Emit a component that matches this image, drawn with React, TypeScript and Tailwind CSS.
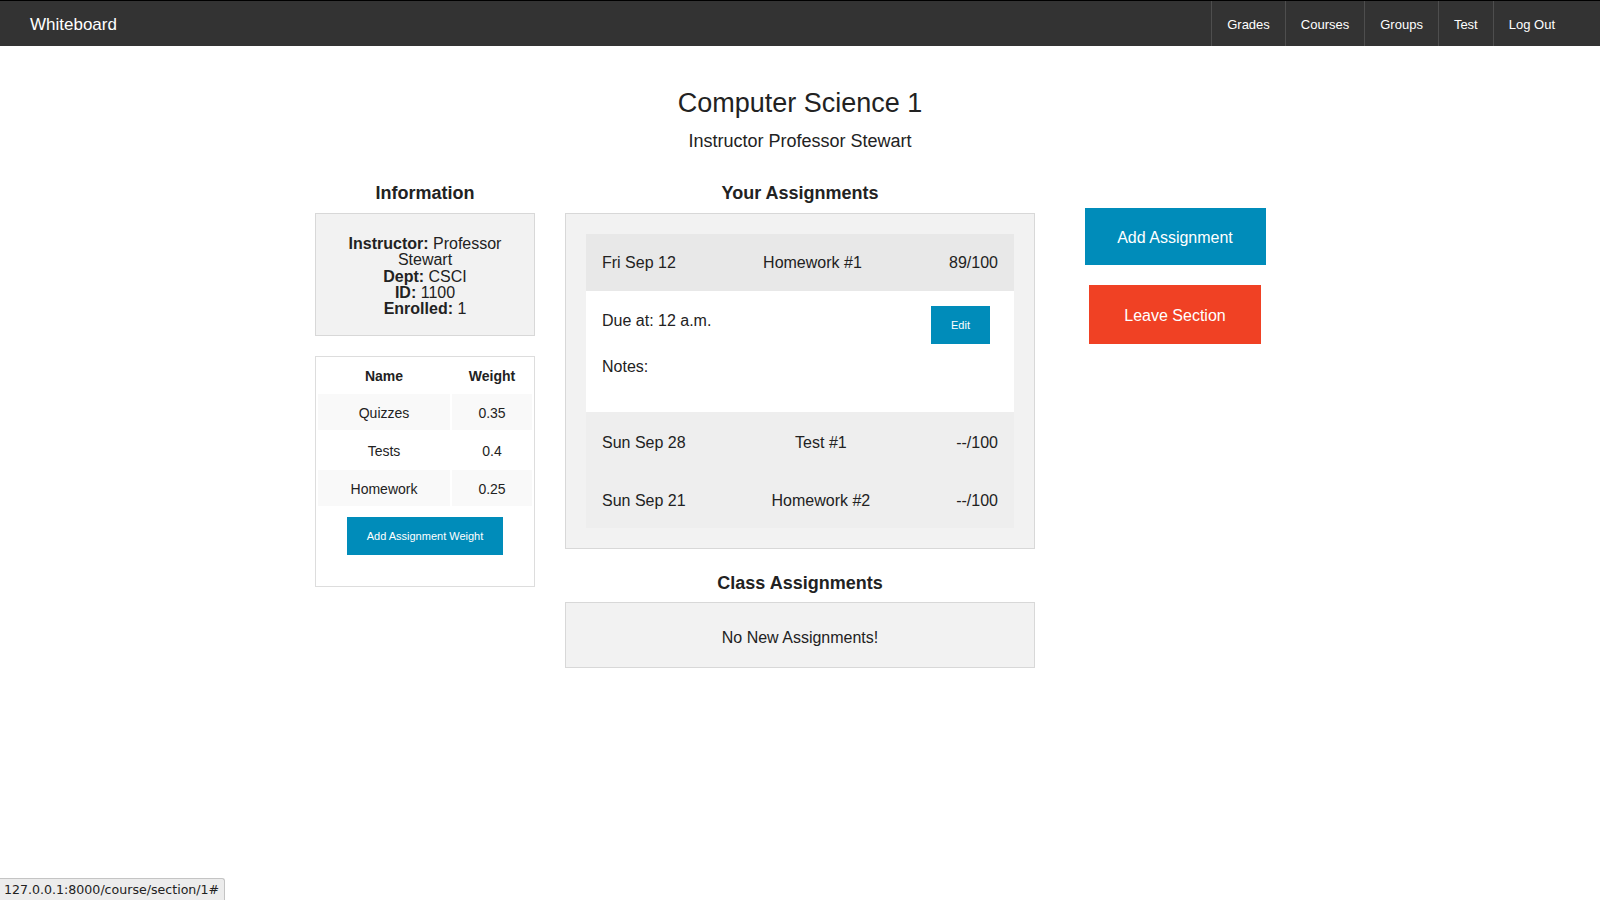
const weights = [
  { name: "Quizzes", weight: "0.35", striped: true },
  { name: "Tests", weight: "0.4", striped: false },
  { name: "Homework", weight: "0.25", striped: true },
];

const otherAssignments = [
  { date: "Sun Sep 28", title: "Test #1", score: "--/100" },
  { date: "Sun Sep 21", title: "Homework #2", score: "--/100" },
];

const navLinks = ["Grades", "Courses", "Groups", "Test", "Log Out"];

export default function App() {
  return (
    <div className="min-h-screen bg-white font-['Liberation_Sans',Arial,sans-serif] text-[#222]">
      <nav className="flex h-[46px] items-stretch justify-between border-t border-black bg-[#333] text-white">
        <a href="#" className="flex items-center pl-[30px] pt-[3px] text-[17px]">
          Whiteboard
        </a>
        <ul className="flex items-stretch pr-[30px]">
          {navLinks.map((link) => (
            <li key={link} className="flex items-center border-l border-[#4e4e4e] px-[15px] pt-[3px] text-[13px]">
              <a href="#">{link}</a>
            </li>
          ))}
        </ul>
      </nav>

      <header className="text-center">
        <h1 className="mt-[41px] text-[27px] leading-[32px]">Computer Science 1</h1>
        <h3 className="mt-[10px] text-[18px] leading-[24px]">Instructor Professor Stewart</h3>
      </header>

      <div className="mt-[28px] flex justify-center gap-[30px]">
        {/* info + weights */}
        <section className="w-[220px]">
          <h4 className="text-center text-[18px] font-bold leading-[24px]">Information</h4>
          <div className="mt-2 border border-[#d8d8d8] bg-[#f2f2f2] px-5 pb-[18px] pt-[22px] text-center text-[16px] leading-[16.3px]">
            <p>
              <b>Instructor:</b> Professor Stewart
            </p>
            <p>
              <b>Dept:</b> CSCI
            </p>
            <p>
              <b>ID:</b> 1100
            </p>
            <p>
              <b>Enrolled:</b> 1
            </p>
          </div>

          <div className="mt-5 border border-[#ddd] bg-white pb-[31px]">
            <table className="w-full border-separate border-spacing-[2px] text-center text-[14px]">
              <thead>
                <tr className="h-[33px]">
                  <th className="w-[132px] pt-[2px] font-bold">Name</th>
                  <th className="pt-[2px] font-bold">Weight</th>
                </tr>
              </thead>
              <tbody>
                {weights.map((w) => (
                  <tr key={w.name} className="h-[36px]">
                    <td className={w.striped ? "bg-[#f9f9f9] pt-[2px]" : "pt-[2px]"}>{w.name}</td>
                    <td className={w.striped ? "bg-[#f9f9f9] pt-[2px]" : "pt-[2px]"}>{w.weight}</td>
                  </tr>
                ))}
              </tbody>
            </table>
            <div className="mt-[9px] flex justify-center">
              <button className="h-[38px] bg-[#008cba] px-5 text-[11px] text-white">Add Assignment Weight</button>
            </div>
          </div>
        </section>

        {/* assignments */}
        <section className="w-[470px]">
          <h4 className="text-center text-[18px] font-bold leading-[24px]">Your Assignments</h4>
          <div className="mt-2 border border-[#d8d8d8] bg-[#f2f2f2] p-5 text-[16px]">
            <div className="flex h-[57px] items-center justify-between bg-[#e8e8e8] px-4 pt-px">
              <span>Fri Sep 12</span>
              <span>Homework #1</span>
              <span>89/100</span>
            </div>
            <div className="flex items-start justify-between bg-white pb-[33px] pl-4 pr-6 pt-[15px]">
              <div className="pt-[3px] leading-6">
                <p>Due at: 12 a.m.</p>
                <p className="mt-[22px]">Notes:</p>
              </div>
              <button className="h-[38px] bg-[#008cba] px-5 text-[11px] text-white">Edit</button>
            </div>
            {otherAssignments.map((a) => (
              <div key={a.date} className="flex h-[58px] items-center justify-between bg-[#eee] px-4 pt-[3px]">
                <span>{a.date}</span>
                <span>{a.title}</span>
                <span>{a.score}</span>
              </div>
            ))}
          </div>

          <h4 className="mt-[22px] text-center text-[18px] font-bold leading-[24px]">Class Assignments</h4>
          <div className="mt-[7px] border border-[#d8d8d8] bg-[#f2f2f2] pb-[18px] pt-[24px] text-center text-[16px] leading-[22px]">
            No New Assignments!
          </div>
        </section>

        {/* actions */}
        <section className="flex w-[220px] flex-col items-center gap-5 pt-[27px]">
          <button className="h-[57px] w-[181px] bg-[#008cba] pt-[3px] text-[16px] text-white">Add Assignment</button>
          <button className="h-[59px] w-[172px] bg-[#f04124] pt-[3px] text-[16px] text-white">Leave Section</button>
        </section>
      </div>

      <div className="fixed bottom-0 left-0 rounded-tr-[3px] border-r border-t border-[#c4c4c4] bg-[#ececec] pl-1 pr-[5px] font-['DejaVu_Sans',sans-serif] text-[12.6px] leading-[21px] text-[#222]">
        127.0.0.1:8000/course/section/1#
      </div>
    </div>
  );
}
